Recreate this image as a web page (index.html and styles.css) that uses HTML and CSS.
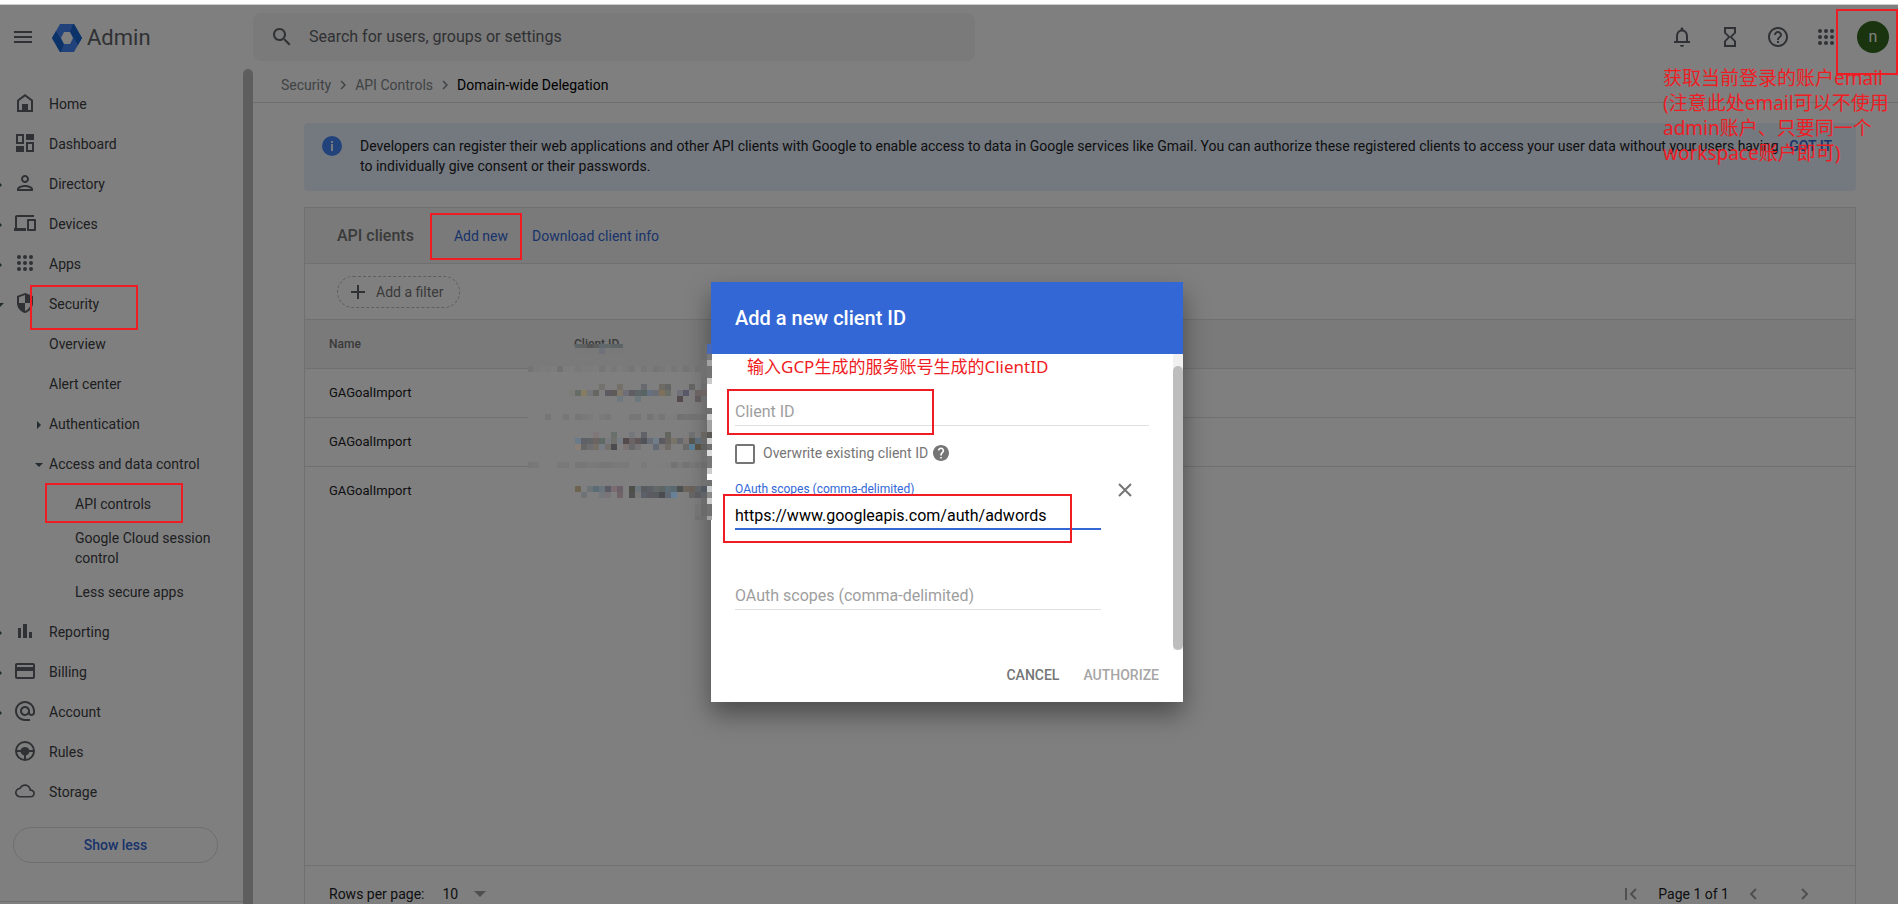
FILE: index.html
```html
<!DOCTYPE html>
<html lang="en">
<head>
    <meta charset="utf-8">
    <title>Admin - Domain-wide Delegation</title>
    <link rel="stylesheet" href="styles.css">
</head>
<body>
    <header class="topbar">
        <button class="icon-btn menu-btn" aria-label="Main menu">
            <svg width="24" height="24" viewBox="0 0 24 24"><path d="M3 18h18v-2H3v2zm0-5h18v-2H3v2zm0-7v2h18V6H3z"/></svg>
        </button>
        <a class="brand" href="#">
            <svg width="30" height="28" viewBox="0 0 30 28">
                <path fill="#4285f4" d="M8 0h14l8 14-8 14H8L0 14z"/>
                <path fill="#1967d2" d="M22 0l8 14-4 7-8-13 3-8z"/>
                <path fill="#1967d2" d="M8 28L0 14l4-7 8 13-3 8z"/>
                <path fill="#fff" d="M12 8h6l3 6-3 6h-6l-3-6z"/>
            </svg>
            <span>Admin</span>
        </a>
        <form class="search">
            <svg width="24" height="24" viewBox="0 0 24 24"><path d="M15.5 14h-.79l-.28-.27C15.41 12.59 16 11.11 16 9.5 16 5.91 13.09 3 9.5 3S3 5.91 3 9.5 5.91 16 9.5 16c1.61 0 3.09-.59 4.23-1.57l.27.28v.79l5 4.99L20.49 19l-4.99-5zm-6 0C7.01 14 5 11.99 5 9.5S7.01 5 9.5 5 14 7.01 14 9.5 11.99 14 9.5 14z"/></svg>
            <input type="text" aria-label="Search" placeholder="Search for users, groups or settings">
        </form>
        <div class="tools">
            <button class="icon-btn" aria-label="Notifications">
                <svg width="24" height="24" viewBox="0 0 24 24"><path d="M12 22c1.1 0 2-.9 2-2h-4c0 1.100.9 2 2 2zm6-6v-5c0-3.070-1.640-5.640-4.500-6.320V4c0-.83-.67-1.500-1.500-1.500s-1.500.67-1.500 1.500v.68C7.630 5.360 6 7.920 6 11v5H4v2h16v-2h-2zm-2 0H8v-5c0-2.480 1.510-4.500 4-4.500s4 2.020 4 4.500v5z"/></svg>
            </button>
            <button class="icon-btn" aria-label="Tasks">
                <svg width="24" height="24" viewBox="0 0 24 24"><path d="M6 2v6l4 4-4 4v6h12v-6l-4-4 4-4V2H6zm10 14.500V20H8v-3.500l4-4 4 4zm-4-5l-4-4V4h8v3.500l-4 4z"/></svg>
            </button>
            <button class="icon-btn" aria-label="Help">
                <svg width="24" height="24" viewBox="0 0 24 24"><path d="M11 18h2v-2h-2v2zm1-16C6.480 2 2 6.480 2 12s4.480 10 10 10 10-4.480 10-10S17.520 2 12 2zm0 18c-4.410 0-8-3.590-8-8s3.590-8 8-8 8 3.590 8 8-3.590 8-8 8zm0-14c-2.210 0-4 1.790-4 4h2c0-1.100.9-2 2-2s2 .9 2 2c0 2-3 1.750-3 5h2c0-2.250 3-2.500 3-5 0-2.210-1.790-4-4-4z"/></svg>
            </button>
            <button class="icon-btn" aria-label="Google apps">
                <svg width="24" height="24" viewBox="0 0 24 24"><g><circle cx="6" cy="6" r="2"/><circle cx="12" cy="6" r="2"/><circle cx="18" cy="6" r="2"/><circle cx="6" cy="12" r="2"/><circle cx="12" cy="12" r="2"/><circle cx="18" cy="12" r="2"/><circle cx="6" cy="18" r="2"/><circle cx="12" cy="18" r="2"/><circle cx="18" cy="18" r="2"/></g></svg>
            </button>
            <button class="avatar">n</button>
        </div>
    </header>

    <div class="layout">
        <nav class="sidebar">
            <div class="nav-list">
                <a href="#" class="nav-item">
                    <svg width="24" height="24" viewBox="0 0 24 24"><path d="M12 3L4 9v12h16V9l-8-6zm6 16H6v-9l6-4.500 6 4.500v9z"/><path d="M9 13h6v6H9z"/></svg>
                    Home
                </a>
                <a href="#" class="nav-item">
                    <svg width="24" height="24" viewBox="0 0 24 24"><path d="M3 3h8v10H3zM5 5v6h4V5zM13 3h8v6h-8zM3 15h8v6H3zM13 11h8v10h-8zM15 13v6h4v-6z" fill-rule="evenodd"/></svg>
                    Dashboard
                </a>
                <a href="#" class="nav-item closed">
                    <svg width="24" height="24" viewBox="0 0 24 24"><path d="M12 6c1.100 0 2 .9 2 2s-.9 2-2 2-2-.9-2-2 .9-2 2-2m0 10c2.700 0 5.800 1.290 6 2H6c.23-.72 3.310-2 6-2m0-12C9.790 4 8 5.790 8 8s1.790 4 4 4 4-1.790 4-4-1.790-4-4-4zm0 10c-2.670 0-8 1.340-8 4v2h16v-2c0-2.660-5.330-4-8-4z"/></svg>
                    Directory
                </a>
                <a href="#" class="nav-item closed">
                    <svg width="24" height="24" viewBox="0 0 24 24"><path d="M4 6h17V4H4c-1.100 0-2 .9-2 2v11H1v3h12v-3H4V6zm18 2h-7c-.55 0-1 .45-1 1v10c0 .55.45 1 1 1h7c.55 0 1-.45 1-1V9c0-.55-.45-1-1-1zm-1 10h-5v-8h5v8z"/></svg>
                    Devices
                </a>
                <a href="#" class="nav-item closed">
                    <svg width="24" height="24" viewBox="0 0 24 24"><g><circle cx="6" cy="6" r="2"/><circle cx="12" cy="6" r="2"/><circle cx="18" cy="6" r="2"/><circle cx="6" cy="12" r="2"/><circle cx="12" cy="12" r="2"/><circle cx="18" cy="12" r="2"/><circle cx="6" cy="18" r="2"/><circle cx="12" cy="18" r="2"/><circle cx="18" cy="18" r="2"/></g></svg>
                    Apps
                </a>
                <a href="#" class="nav-item opened">
                    <svg width="24" height="24" viewBox="0 0 24 24"><path fill-rule="evenodd" d="M12 2L4 5v7c0 4.600 3.400 8.900 8 10 4.600-1.100 8-5.400 8-10V5l-8-3zM12 4v8h6c-.5 3.700-2.800 6.900-6 7.900V12H6V6.300z"/></svg>
                    Security
                </a>
                <a href="#" class="nav-item">Overview</a>
                <a href="#" class="nav-item">Alert center</a>
                <a href="#" class="nav-item closed sub">Authentication</a>
                <a href="#" class="nav-item opened sub">Access and data control</a>
                <a href="#" class="nav-item leaf">API controls</a>
                <a href="#" class="nav-item leaf">Google Cloud session control</a>
                <a href="#" class="nav-item leaf">Less secure apps</a>
                <a href="#" class="nav-item closed">
                    <svg width="24" height="24" viewBox="0 0 24 24"><path d="M5 9h3v10H5zM10 5h4v14h-4zM16 13h3v6h-3z"/></svg>
                    Reporting
                </a>
                <a href="#" class="nav-item closed">
                    <svg width="24" height="24" viewBox="0 0 24 24"><path d="M20 4H4c-1.110 0-1.990.89-1.990 2L2 18c0 1.110.89 2 2 2h16c1.110 0 2-.89 2-2V6c0-1.110-.89-2-2-2zm0 14H4v-6h16v6zm0-10H4V6h16v2z"/></svg>
                    Billing
                </a>
                <a href="#" class="nav-item closed">
                    <svg width="24" height="24" viewBox="0 0 24 24"><path d="M12 2C6.480 2 2 6.480 2 12s4.480 10 10 10h5v-2h-5c-4.340 0-8-3.660-8-8s3.660-8 8-8 8 3.660 8 8v1.430c0 .79-.71 1.570-1.500 1.570s-1.500-.78-1.500-1.570V12c0-2.760-2.240-5-5-5s-5 2.240-5 5 2.240 5 5 5c1.380 0 2.640-.56 3.540-1.470.65.89 1.770 1.470 2.960 1.470 1.970 0 3.500-1.600 3.500-3.570V12c0-5.520-4.480-10-10-10zm0 13c-1.660 0-3-1.340-3-3s1.340-3 3-3 3 1.340 3 3-1.340 3-3 3z"/></svg>
                    Account
                </a>
                <a href="#" class="nav-item">
                    <svg width="24" height="24" viewBox="0 0 24 24"><circle cx="12" cy="12" r="9" fill="none" stroke="#5f6368" stroke-width="2"/><path d="M3 11h4.500c.8-2 2.500-3 4.500-3s3.700 1 4.500 3H21v2h-4.500c-.6 1.800-1.900 3-3.500 3.600V21h-2v-4.400c-1.600-.6-2.900-1.800-3.500-3.600H3z"/></svg>
                    Rules
                </a>
                <a href="#" class="nav-item">
                    <svg width="24" height="24" viewBox="0 0 24 24"><path d="M19.350 10.040C18.670 6.590 15.640 4 12 4 9.110 4 6.600 5.640 5.350 8.040 2.340 8.360 0 10.910 0 14c0 3.310 2.690 6 6 6h13c2.760 0 5-2.240 5-5 0-2.640-2.050-4.780-4.650-4.960zM19 18H6c-2.210 0-4-1.790-4-4s1.790-4 4-4h.71C7.370 7.690 9.480 6 12 6c3.040 0 5.500 2.460 5.500 5.500v.5H19c1.660 0 3 1.340 3 3s-1.340 3-3 3z" transform="translate(2 2) scale(.83)"/></svg>
                    Storage
                </a>
                <button class="show-less">Show less</button>
                <div class="nav-end"></div>
            </div>
            <div class="nav-scroll"></div>
        </nav>

        <main class="main">
            <div class="crumbs">
                <a href="#">Security</a>
                <svg width="6" height="10" viewBox="0 0 6 10"><path d="M1 1l4 4-4 4"/></svg>
                <a href="#">API Controls</a>
                <svg width="6" height="10" viewBox="0 0 6 10"><path d="M1 1l4 4-4 4"/></svg>
                <span>Domain-wide Delegation</span>
            </div>
            <div class="content">
                <section class="banner">
                    <svg width="20" height="20" viewBox="0 0 20 20"><circle cx="10" cy="10" r="10" fill="#4285f4"/><path fill="#e8f0fe" d="M9 5h2v2H9zM9 8h2v7H9z"/></svg>
                    <p>Developers can register their web applications and other API clients with Google to enable access to data in Google services like Gmail. You can authorize these registered clients to access your user data without your users having to individually give consent or their passwords.</p>
                    <button>GOT IT</button>
                </section>

                <section class="card">
                    <div class="card-head">
                        <h2>API clients</h2>
                        <a href="#">Add new</a>
                        <a href="#">Download client info</a>
                    </div>
                    <div class="filter-row">
                        <button class="chip">
                            <svg width="14" height="14" viewBox="0 0 14 14"><path d="M6 0h2v6h6v2H8v6H6V8H0V6h6z"/></svg>
                            Add a filter
                        </button>
                    </div>
                    <table class="clients">
                        <thead>
                            <tr><th>Name</th><th>Client ID</th></tr>
                        </thead>
                        <tbody>
                            <tr><td>GAGoalImport</td><td></td></tr>
                            <tr><td>GAGoalImport</td><td></td></tr>
                            <tr><td>GAGoalImport</td><td></td></tr>
                        </tbody>
                    </table>
                    <div class="card-foot">
                        <label for="rows">Rows per page:</label>
                        <span class="rows-select">
                            <select id="rows"><option>10</option><option>20</option></select>
                            <svg width="12" height="6" viewBox="0 0 12 6"><path d="M0 0h12L6 6z"/></svg>
                        </span>
                        <div class="pager">
                            <button aria-label="First page"><svg width="14" height="12" viewBox="0 0 14 12"><path d="M2 0v12M12 1L7 6l5 5"/></svg></button>
                            <span>Page 1 of 1</span>
                            <button aria-label="Previous page"><svg width="8" height="12" viewBox="0 0 8 12"><path d="M7 1L2 6l5 5"/></svg></button>
                            <button aria-label="Next page"><svg width="8" height="12" viewBox="0 0 8 12"><path d="M1 1l5 5-5 5"/></svg></button>
                        </div>
                    </div>
                </section>
            </div>
        </main>
    </div>

    <div class="overlay"></div>

    <div class="dialog" role="dialog" aria-labelledby="dlg-title">
        <h1 id="dlg-title">Add a new client ID</h1>
        <div class="dialog-body">
            <form class="dialog-form">
                <input class="field" type="text" aria-label="Client ID" placeholder="Client ID">
                <div class="check-row">
                    <input type="checkbox" id="overwrite">
                    <label for="overwrite">Overwrite existing client ID</label>
                    <svg width="16" height="16" viewBox="2 2 20 20"><path d="M12 2C6.480 2 2 6.480 2 12s4.480 10 10 10 10-4.480 10-10S17.520 2 12 2zm1 17h-2v-2h2v2zm2.070-7.750l-.9.920C13.450 12.900 13 13.500 13 15h-2v-.5c0-1.100.45-2.100 1.170-2.830l1.240-1.260c.37-.36.590-.86.590-1.410 0-1.100-.9-2-2-2s-2 .9-2 2H8c0-2.210 1.790-4 4-4s4 1.790 4 4c0 .88-.36 1.680-.93 2.250z"/></svg>
                </div>
                <div class="scope-row">
                    <div class="scope">
                        <label for="scope1">OAuth scopes (comma-delimited)</label>
                        <input class="field active" type="text" id="scope1" value="https://www.googleapis.com/auth/adwords">
                    </div>
                    <button type="button" class="remove" aria-label="Remove scope">
                        <svg width="14" height="14" viewBox="0 0 14 14"><path d="M1 1l12 12M13 1L1 13"/></svg>
                    </button>
                </div>
                <input class="field last" type="text" aria-label="OAuth scopes" placeholder="OAuth scopes (comma-delimited)">
            </form>
            <div class="dialog-scroll"><div class="thumb"></div></div>
        </div>
        <div class="dialog-foot">
            <button>CANCEL</button>
            <button disabled>AUTHORIZE</button>
        </div>
        <svg class="mosaic" id="mosaic" width="184" height="176" viewBox="528 344 184 176"></svg>
        <div class="mark mark-client"></div>
        <div class="mark mark-scope"></div>
        <p class="note note-client">输入GCP生成的服务账号生成的ClientID</p>
    </div>

    <div class="mark mark-security"></div>
    <div class="mark mark-api"></div>
    <div class="mark mark-add"></div>
    <div class="mark mark-avatar"></div>
    <p class="note note-email">获取当前登录的账户email<br>(注意此处email可以不使用<br>admin账户、只要同一个<br>workspace账户即可)</p>

    <script src="mosaic.js"></script>
</body>
</html>
```

FILE: styles.css
```css
* { box-sizing: border-box; }
body { margin: 0; height: 100vh; overflow: hidden; position: relative; display: flex; flex-direction: column; border-top: 4px solid #fff; background: #fff; color: #202124; font: 14px/20px Roboto, sans-serif; }
a { color: inherit; text-decoration: none; }
button { padding: 0; border: none; background: none; font: inherit; color: inherit; cursor: pointer; }
svg { display: block; flex: none; }
p, h1, h2 { margin: 0; }

/* top bar */
.topbar { flex: none; height: 65px; border-top: 1px solid #ccc; display: flex; align-items: center; }
.topbar svg, .nav-item svg { fill: #5f6368; }
.icon-btn { width: 24px; height: 24px; }
.menu-btn { margin-left: 11px; }
.brand { width: 201px; margin-left: 17px; padding-top: 2px; display: flex; align-items: center; gap: 5px; font-size: 22px; line-height: 28px; color: #5f6368; }
.search { width: 722px; height: 48px; padding: 0 17px; border-radius: 8px; background: #f4f4f4; display: flex; align-items: center; gap: 15px; }
.search input { flex: 1; padding: 0; border: none; outline: none; background: none; font: 16px/24px Roboto, sans-serif; }
.search input::placeholder { color: #5f6368; }
.tools { margin-left: auto; padding-right: 9px; display: flex; align-items: center; gap: 24px; }
.avatar { width: 32px; height: 32px; margin-left: -5px; border-radius: 50%; background: #33691e; color: #fff; font-size: 16px; }

.layout { flex: 1; min-height: 0; display: flex; }

/* left navigation */
.sidebar { width: 253px; flex: none; display: flex; overflow: hidden; }
.nav-list { flex: 1; padding-top: 15px; color: #3c4043; }
.nav-item { position: relative; display: block; min-height: 40px; padding: 10px 24px 10px 49px; }
.nav-item svg { position: absolute; left: 13px; top: 7px; }
.leaf { padding: 4px 24px 4px 75px; display: flex; align-items: center; }
.closed::before, .opened::before { content: ""; position: absolute; top: 17px; left: -2px; border: 4px solid transparent; border-left-color: #455a64; border-right-width: 0; }
.opened::before { left: -4px; top: 19px; border: 4px solid transparent; border-top-color: #455a64; border-bottom-width: 0; }
.sub::before { left: 37px; }
.sub.opened::before { left: 35px; }
.show-less { display: block; width: 205px; height: 36px; margin: 15px 13px 38px; border: 1px solid #dadce0; border-radius: 18px; color: #3367d6; font-weight: 500; }
.nav-end { border-top: 1px solid #dadce0; }
.nav-scroll { width: 10px; border-radius: 5px 5px 0 0; background: #bdbdbd; }

/* main column */
.main { flex: 1; min-width: 0; display: flex; flex-direction: column; }
.crumbs { flex: none; height: 34px; padding: 0 28px 2px; border-bottom: 1px solid #dadce0; display: flex; align-items: center; gap: 9px; color: #80868b; }
.crumbs span { color: #000; }
.crumbs svg { fill: none; stroke: #80868b; stroke-width: 1.5; }
.content { flex: 1; padding: 20px 42px 0 51px; }
.banner { padding: 13px 24px 15px 18px; border-radius: 4px; background: #e8f0fe; display: flex; align-items: flex-start; gap: 18px; }
.banner p { flex: 1; margin-right: -8px; }
.banner button { color: #3367d6; font-weight: 500; }
.card { margin-top: 16px; border: 1px solid #e0e0e0; }
.card-head { height: 56px; padding-left: 32px; border-bottom: 1px solid #e0e0e0; background: #f5f5f5; display: flex; align-items: center; gap: 24px; color: #3367d6; }
.card-head h2 { margin-right: 16px; font-size: 16px; font-weight: 500; color: #757575; }
.filter-row { height: 56px; padding: 12px 32px; border-bottom: 1px solid #e0e0e0; }
.chip { height: 32px; padding: 0 16px 0 13px; border: 1px dashed #bdbdbd; border-radius: 16px; display: flex; align-items: center; gap: 11px; color: #757575; }
.chip svg { fill: #5f6368; }
.clients { width: 100%; border-collapse: collapse; font-size: 13px; }
.clients th { height: 48px; padding: 0 0 0 24px; background: #f5f5f5; border-bottom: 1px solid #e0e0e0; text-align: left; font-size: 12px; font-weight: 500; color: #757575; }
.clients td { height: 49px; padding: 0 0 0 24px; border-bottom: 1px solid #e0e0e0; }
.clients tr:last-child td { border-bottom: none; }
.clients th:first-child { width: 245px; }
.card-foot { height: 56px; margin-top: 350px; padding: 0 46px 0 24px; border-top: 1px solid #e0e0e0; display: flex; align-items: center; }
.rows-select { margin-left: 18px; display: flex; align-items: center; gap: 16px; }
.rows-select select { appearance: none; padding: 0; border: none; background: none; font: inherit; color: inherit; }
.card-foot svg { fill: none; stroke: #9e9e9e; stroke-width: 2; }
.rows-select svg { fill: #9e9e9e; stroke: none; }
.pager { margin-left: auto; display: flex; align-items: center; gap: 20px; }
.pager button:last-child { margin-left: 24px; }

.overlay { position: absolute; inset: 1px 0 0 0; background: rgba(0, 0, 0, .5); }

/* add client dialog */
.dialog { position: absolute; top: 278px; left: calc(50% - 238px); width: 472px; background: #fff; box-shadow: 0 12px 24px rgba(0, 0, 0, .4); }
.dialog h1 { height: 72px; padding-left: 24px; background: #3367d6; color: #fff; font-size: 20px; font-weight: 500; line-height: 72px; }
.dialog-body { display: flex; height: 296px; }
.dialog-form { flex: 1; padding: 44px 24px 0; }
.dialog-scroll { width: 10px; padding-top: 12px; background: #f0f0f0; }
.thumb { height: 100%; border-radius: 5px; background: #bdbdbd; }
.field { display: block; width: 100%; height: 28px; padding: 0; border: none; border-bottom: 1px solid #e0e0e0; outline: none; background: none; font: 16px/24px Roboto, sans-serif; color: #000; }
.field::placeholder { color: #9e9e9e; }
.field.active { border-bottom: 2px solid #3367d6; }
.check-row { margin-top: 18px; display: flex; align-items: center; gap: 5px; color: #757575; }
.check-row input { appearance: none; width: 20px; height: 20px; margin: 0 3px 0 0; border: 2px solid #757575; border-radius: 2px; }
.check-row label, .check-row svg { margin-bottom: 2px; }
.check-row svg { fill: #757575; }
.check-row { height: 20px; }
.scope-row { margin-top: 17px; display: flex; align-items: flex-start; gap: 17px; }
.scope, .field.last { width: 366px; }
.scope { flex: none; }
.scope label { display: block; margin-bottom: 5px; font-size: 12px; line-height: 16px; color: #3367d6; }
.field.last { margin-top: 52px; }
.remove { margin-top: 2px; }
.remove svg { fill: none; stroke: #757575; stroke-width: 2; }
.dialog-foot { height: 52px; padding: 0 24px 2px; display: flex; align-items: center; justify-content: flex-end; gap: 24px; font-weight: 500; color: #757575; }
.dialog-foot button:disabled { color: #a6a6a6; }

/* pixelated area over the client ids */
.mosaic { position: absolute; left: -183px; top: 62px; }

/* red marks and notes */
.mark { position: absolute; border: 2px solid #ef1c24; }
.mark-security { left: 30px; top: 281px; width: 108px; height: 45px; }
.mark-api { left: 45px; top: 479px; width: 138px; height: 40px; }
.mark-add { left: 430px; top: 209px; width: 92px; height: 47px; }
.mark-avatar { right: 0; top: 5px; width: 62px; height: 66px; }
.mark-client { left: 16px; top: 107px; width: 207px; height: 46px; }
.mark-scope { left: 12px; top: 212px; width: 349px; height: 49px; }
.note { position: absolute; color: #ef1c24; font-family: "Noto Sans", "Noto Sans CJK SC", sans-serif; white-space: nowrap; }
.note-client { left: 36px; top: 75px; font-size: 17px; line-height: 20px; }
.note-email { right: 0; top: 62px; width: 235px; font-size: 19px; line-height: 25px; }
```

FILE: mosaic.js
```js
// each row: y, first column, cell colours ("-" leaves a cell empty)
const rows = [
    [342, 0, '5c6468 606060 545454 5c5c5c 5f686c 606868 5c6464 5c6464 - - - - - - - - - - - - - 6c6c6c 4568b8'],
    [348, 0, '797979 797979 797979 797979 707078 797979 797979 797979 - - - - - - - - - - - - - 6c6c6c 4568b8'],
    [354, 21, '6c6c6c 787878'],
    [360, 21, '707070 a2a2a2'],
    [366, -8, '747474 7a7a7a 7c7c7c 7b7b7b 7d7d7d 727272 7d7d7d 7e7e7e 797979 7c7c7c 7b7b7b 7d7d7d 767676 7c7c7c 787878 7d7d7d 7a7a7a 767676 7d7d7d 777777 7b7b7b 757575 787878 7c7c7c 777777 7b7b7b 747474 777777 707070 707070 737373'],
    [372, 21, '707070 737373'],
    [378, 21, '6e6e6e c8c8c8'],
    [384, 4, '74726e - - 73706a - - - 686a70 - - 6e6a64 646464 - - - 636361 - 6c6c6c ffffff'],
    [390, -1, '7c7c78 666c66 857c62 75767b 666663 - 5e5a62 5e5a5a 807868 6e6e78 5f5c62 5f6468 566464 667080 6a6e74 7f705c 6a6e66 - 707078 585868 - 6c6464 6e6464 ffffff'],
    [396, 7, '707880 - - 6c787c - - - - - - 544c4c - - 605a5c 6e6e70 ffffff'],
    [402, 22, 'ffffff'],
    [408, 22, '707070'],
    [414, -8, '7f7f7f 7f7f7f 7f7f7f 767676 7f7f7f 7f7f7f 777777 7f7f7f 767676 797979 7b7b7b 7f7f7f 7a7a7a 777777 7f7f7f 7f7f7f 7f7f7f 767676 767676 7f7f7f 747474 7c7c7c 767676 7e7e7e 7d7d7d 717171 737373 717171 707070 6c6c6c cccccc'],
    [420, 22, 'a2a2a2'],
    [426, 22, 'a2a2a2'],
    [432, 3, '807878 - - 6a706c - - 74787c - 606268 - - - 62665f - - - 6e7070 - 686460 5a5854'],
    [438, 0, '6a7c8a 5f6068 606466 6c6460 5f6a66 787a80 70706c 767e84 544c4c 6c6464 605858 505458 686c74 707c88 5a5a60 686460 7a7468 66686c 7c7674 585650 5c6c78 686868 cccccc'],
    [444, 0, '8a8078 666666 6e6e70 747068 787c84 74706c 4c4c50 - 7c7472 66686a 767474 - - 646a74 7c7a78 706c68 - - 6c6a68 5a7c94 585040 606060 6e6e6e'],
    [450, 21, '727272 dddddd'],
    [456, 21, '717171 777777'],
    [462, -8, '777777 797979 7f7f7f 7f7f7f 7f7f7f 797979 797979 7f7f7f 777777 777777 7a7a7a 797979 777777 777777 797979 7a7a7a 797979 7f7f7f 7f7f7f 7a7a7a 7f7f7f 7f7f7f 7e7e7e 7d7d7d 737373 7a7a7a 737373 767676 717171 6c6c6c 777777'],
    [468, 21, '717171 cccccc'],
    [474, 21, '717171 ffffff'],
    [480, 21, '717171 707070'],
    [486, 0, '6c6450 - 6c7478 5c6c74 6a747c 5a5a64 7a6c70 6c6068 - 4c5048 6c747c 585c60 5c6064 646868 5c6464 5e6c74 5a6870 4c5050 6a645c 686058 5f6468 545860 c8cccc'],
    [492, 1, '6e7478 - - 74787c 787478 - 706468 - 505050 787878 5c6068 5a5a60 585c60 4a4c50 606874 688098 - - 646464 5c5c60 606468 888888'],
    [498, 21, '6c6c6c cccccc'],
    [504, 20, '747474 6a6a6a 707070'],
    [510, 20, '747474 6a6a6a 707070'],
    [516, 20, '707070 6e6e6e a0a0a0']
];

const mosaic = document.getElementById('mosaic');
rows.forEach(([y, first, cells]) => {
    cells.split(' ').forEach((color, i) => {
        if (color === '-') return;
        const rect = document.createElementNS('http://www.w3.org/2000/svg', 'rect');
        rect.setAttribute('x', 575 + (first + i) * 6);
        rect.setAttribute('y', y);
        rect.setAttribute('width', 6);
        rect.setAttribute('height', 6);
        rect.setAttribute('fill', '#' + color);
        mosaic.appendChild(rect);
    });
});
```
